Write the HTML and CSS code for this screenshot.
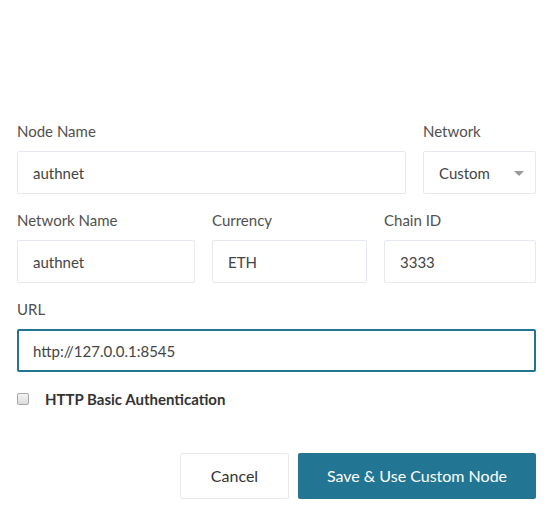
FILE: index.html
```html
<!DOCTYPE html>
<html>
<head>
<meta charset="utf-8">
<link rel="stylesheet" href="styles.css">
</head>
<body>
<div class="form">
  <div class="row row-1">
    <div class="field">
      <div class="label">Node Name</div>
      <div class="input">authnet</div>
    </div>
    <div class="field">
      <div class="label">Network</div>
      <div class="input select">Custom<span class="caret"></span></div>
    </div>
  </div>
  <div class="row row-2">
    <div class="field">
      <div class="label">Network Name</div>
      <div class="input">authnet</div>
    </div>
    <div class="field">
      <div class="label">Currency</div>
      <div class="input">ETH</div>
    </div>
    <div class="field">
      <div class="label">Chain ID</div>
      <div class="input">3333</div>
    </div>
  </div>
  <div class="row">
    <div class="field">
      <div class="label">URL</div>
      <div class="input focus">http://127.0.0.1:8545</div>
    </div>
  </div>
  <div class="check-row">
    <span class="checkbox"></span>
    <span class="check-label">HTTP Basic Authentication</span>
  </div>
  <div class="actions">
    <div class="btn btn-cancel">Cancel</div>
    <div class="btn btn-primary">Save &amp; Use Custom Node</div>
  </div>
</div>
</body>
</html>
```

FILE: styles.css
```css
* { box-sizing: border-box; }
html, body { margin: 0; padding: 0; background: #fff; }
body {
  font-family: Lato, "Open Sans", sans-serif;
  color: #333;
  width: 550px;
  height: 516px;
}
.form {
  padding: 122px 14px 0 17px;
}
.row {
  display: grid;
  column-gap: 17px;
  margin-bottom: 17px;
}
.row-1 { grid-template-columns: 389px 1fr; }
.row-2 { grid-template-columns: 178px 155px 1fr; }
.label {
  font-size: 15px;
  line-height: 18px;
  color: #505050;
  margin-bottom: 11px;
}
.input {
  height: 43px;
  border: 1px solid #e5e8f0;
  border-radius: 2px;
  padding: 0 15px;
  font-size: 15px;
  line-height: 43px;
  color: #444;
  position: relative;
}
.input.focus {
  border: 2px solid #227592;
  padding: 0 14px;
  line-height: 41px;
}
.select .caret {
  position: absolute;
  right: 11px;
  top: 19px;
  width: 0;
  height: 0;
  border-left: 5px solid transparent;
  border-right: 5px solid transparent;
  border-top: 5px solid #999;
}
.check-row {
  display: flex;
  align-items: center;
  height: 13px;
  margin-top: 20px;
}
.checkbox {
  width: 12px;
  height: 12px;
  border: 1px solid #a8a8a8;
  border-radius: 2px;
  background: linear-gradient(#f4f4f4, #dcdcdc);
  margin-right: 16px;
}
.check-label {
  font-size: 15px;
  font-weight: bold;
  color: #333;
}
.actions {
  display: flex;
  justify-content: flex-end;
  gap: 9px;
  margin-top: 48px;
}
.btn {
  height: 46px;
  border-radius: 2px;
  font-size: 16px;
  line-height: 46px;
  text-align: center;
}
.btn-cancel {
  width: 109px;
  border: 1px solid #e5e8f0;
  line-height: 44px;
  color: #333;
}
.btn-primary {
  width: 238px;
  background: #237693;
  color: #fff;
}
```
